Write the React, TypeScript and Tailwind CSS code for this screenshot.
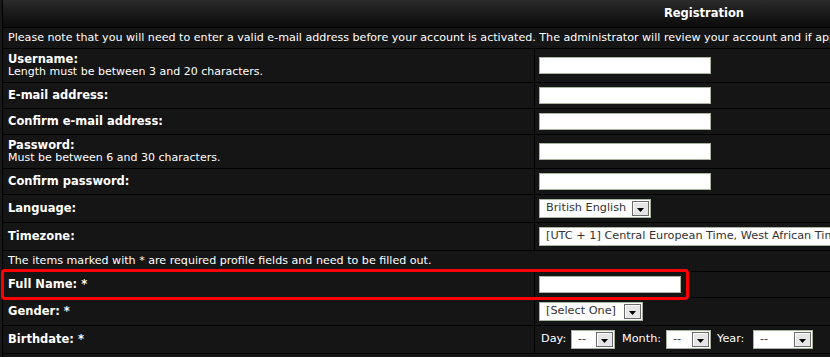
import React from "react";

const font = { fontFamily: '"DejaVu Sans", Verdana, sans-serif' };

function Arrow() {
  return (
    <span className="flex h-[15px] w-[17px] items-end justify-center border border-[#6a6a6a] bg-[#e6e6e6] pb-[3px] shadow-[inset_1px_1px_0_#ffffff]">
      <svg width="7" height="4" viewBox="0 0 7 4">
        <path d="M0 0 H7 L3.5 4 Z" fill="#000" />
      </svg>
    </span>
  );
}

function Select({ text, w }: { text: string; w: number }) {
  return (
    <div
      className="flex h-[19px] items-center justify-between border border-[#a8b3a0] bg-white pl-[6px] pr-[1px] text-[11.25px] text-[#333]"
      style={{ width: w }}
    >
      <span className="whitespace-nowrap">{text}</span>
      <Arrow />
    </div>
  );
}

function Input({ w }: { w: number }) {
  return <div className="h-[17px] border border-[#a8b3a0] bg-white" style={{ width: w }} />;
}

function Row({ h, label, note, children }: { h: number; label: string; note?: string; children?: React.ReactNode }) {
  return (
    <div className="flex border-b border-black" style={{ height: h }}>
      <div className="flex w-[532px] shrink-0 flex-col justify-center border-r border-black pl-[5px] leading-[12.5px]">
        <div className="text-[11.5px] font-bold text-white">{label}</div>
        {note && <div className="text-[11px] text-white">{note}</div>}
      </div>
      <div className="flex flex-1 items-center pl-[4px]">{children}</div>
    </div>
  );
}

function Notice({ text }: { text: string }) {
  return (
    <div className="flex h-[21px] items-center whitespace-nowrap border-b border-black pl-[5px] text-[11.1px] text-white">
      {text}
    </div>
  );
}

export default function App() {
  return (
    <div className="relative h-[357px] w-[830px] overflow-hidden bg-[#181818]" style={font}>
      <div className="ml-[2px] w-[1403px] border-l border-black bg-[#151515]">
        <div className="flex h-[28px] items-center justify-center border-b border-black bg-gradient-to-b from-[#2b2b2b] to-[#0b0b0b] text-[11.5px] font-bold text-white">
          Registration
        </div>
        <Notice text="Please note that you will need to enter a valid e-mail address before your account is activated. The administrator will review your account and if approved you will receive an e-mail at the address you specified." />
        <Row h={34} label="Username:" note="Length must be between 3 and 20 characters.">
          <Input w={172} />
        </Row>
        <Row h={26} label="E-mail address:">
          <Input w={172} />
        </Row>
        <Row h={26} label="Confirm e-mail address:">
          <Input w={172} />
        </Row>
        <Row h={34} label="Password:" note="Must be between 6 and 30 characters.">
          <Input w={172} />
        </Row>
        <Row h={26} label="Confirm password:">
          <Input w={172} />
        </Row>
        <Row h={28} label="Language:">
          <Select text="British English" w={112} />
        </Row>
        <Row h={28} label="Timezone:">
          <Select text="[UTC + 1] Central European Time, West African Time" w={420} />
        </Row>
        <Notice text="The items marked with * are required profile fields and need to be filled out." />
        <Row h={26} label="Full Name: *">
          <Input w={142} />
        </Row>
        <Row h={28} label="Gender: *">
          <Select text="[Select One]" w={104} />
        </Row>
        <Row h={28} label="Birthdate: *">
          <div className="flex items-center text-[11.25px] text-white">
            <span className="w-[32px] pl-[2px]">Day:</span>
            <Select text="--" w={44} />
            <span className="ml-[7px] w-[44px]">Month:</span>
            <Select text="--" w={45} />
            <span className="ml-[6px] w-[36px]">Year:</span>
            <Select text="--" w={60} />
          </div>
        </Row>
        <div className="h-[10px]" />
      </div>
      <div className="absolute left-[1px] top-[269px] h-[31px] w-[688px] rounded-[4px] border-[3px] border-[#ff0000]" />
    </div>
  );
}
